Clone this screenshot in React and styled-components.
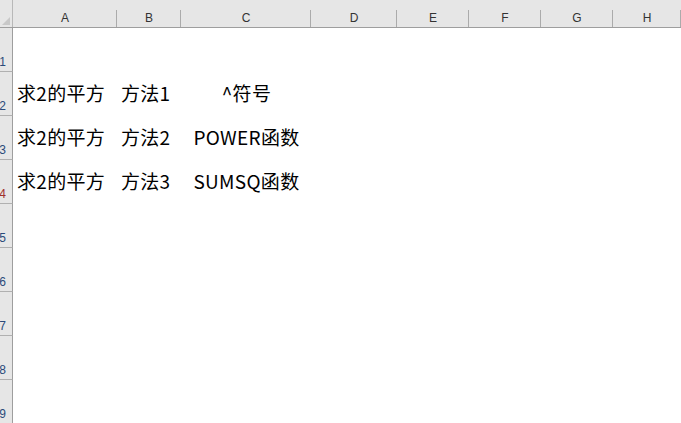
import React from 'react';
import styled, { createGlobalStyle } from 'styled-components';

const Global = createGlobalStyle`
  body { margin: 0; background: #fff; font-family: "Noto Sans CJK SC", "Noto Sans", sans-serif; }
`;

const cols = [
  { name: 'A', w: 104 },
  { name: 'B', w: 64 },
  { name: 'C', w: 130 },
  { name: 'D', w: 86 },
  { name: 'E', w: 72 },
  { name: 'F', w: 72 },
  { name: 'G', w: 72 },
  { name: 'H', w: 68 },
];

const rows = [
  ['', '', ''],
  ['求2的平方', '方法1', '^符号'],
  ['求2的平方', '方法2', 'POWER函数'],
  ['求2的平方', '方法3', 'SUMSQ函数'],
  ['', '', ''], ['', '', ''], ['', '', ''], ['', '', ''], ['', '', ''],
];

const template = `13px ${cols.map(c => c.w + 'px').join(' ')}`;

const Sheet = styled.div`
  width: 681px;
  height: 423px;
  overflow: hidden;
`;

const Header = styled.div`
  display: grid;
  grid-template-columns: ${template};
  height: 28px;
  background: #e6e6e6;
  border-bottom: 1px solid #9e9e9e;
  box-sizing: border-box;
`;

const Corner = styled.div`
  border-right: 1px solid #b8b8b8;
  position: relative;
  &::after {
    content: '';
    position: absolute;
    right: 2px;
    bottom: 2px;
    border-left: 8px solid transparent;
    border-bottom: 8px solid #c8c8c8;
  }
`;

const ColHead = styled.div`
  display: flex;
  align-items: flex-end;
  justify-content: center;
  padding-bottom: 2px;
  font: 12px "Liberation Sans", Arial, sans-serif;
  color: #333;
  position: relative;
  &::after {
    content: '';
    position: absolute;
    right: 0;
    bottom: 0;
    height: 17px;
    border-right: 1px solid #ababab;
  }
`;

const Row = styled.div`
  display: grid;
  grid-template-columns: ${template};
  height: 44px;
`;

const RowHead = styled.div`
  background: #e6e6e6;
  border-right: 1px solid #9e9e9e;
  border-bottom: 1px solid #b0b0b0;
  box-sizing: border-box;
  display: flex;
  align-items: flex-end;
  justify-content: flex-end;
  overflow: hidden;
  font: 12px "Liberation Sans", Arial, sans-serif;
  color: ${p => (p.$red ? '#a0302a' : '#2a4a7a')};
  padding-bottom: 2px;
  & span { margin-right: 6px; }
`;

const Cell = styled.div`
  display: flex;
  align-items: flex-end;
  padding: 0 3px 10px 4px;
  justify-content: ${p => (p.$center ? 'center' : 'flex-start')};
  font-size: 19px;
  letter-spacing: 0.3px;
  color: #000;
  white-space: nowrap;
`;

export default function App() {
  return (
    <Sheet>
      <Global />
      <Header>
        <Corner />
        {cols.map(c => <ColHead key={c.name}>{c.name}</ColHead>)}
      </Header>
      {rows.map((r, i) => (
        <Row key={i}>
          <RowHead $red={i === 3}><span>{i + 1}</span></RowHead>
          <Cell>{r[0]}</Cell>
          <Cell>{r[1]}</Cell>
          <Cell $center>{r[2]}</Cell>
          {cols.slice(3).map(c => <Cell key={c.name} />)}
        </Row>
      ))}
    </Sheet>
  );
}
